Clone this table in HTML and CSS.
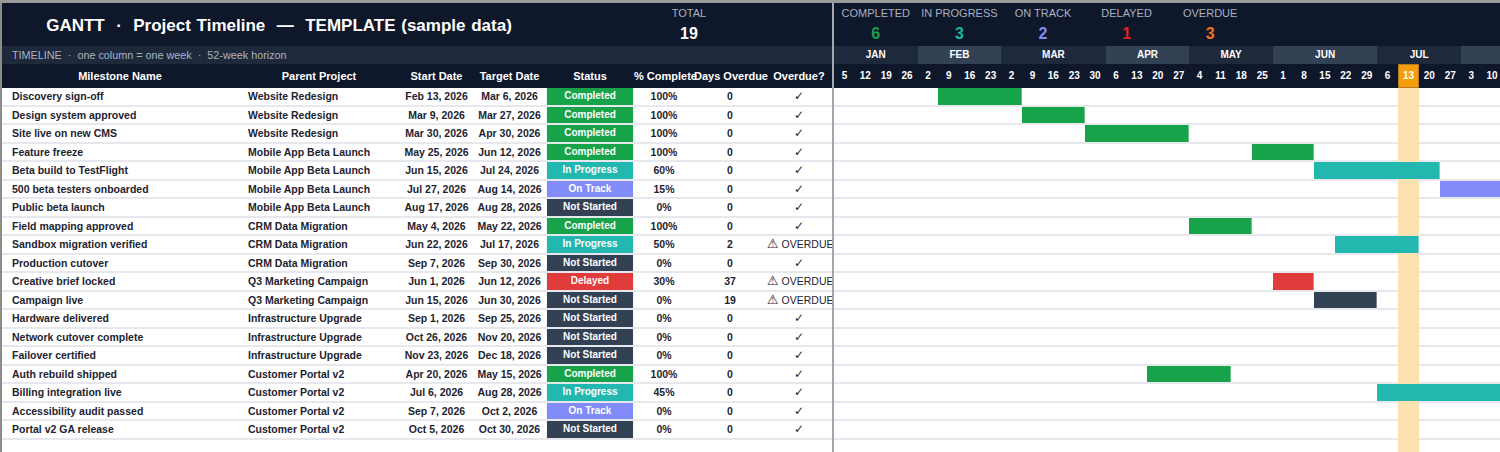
FILE: index.html
```html
<!DOCTYPE html>
<html lang="en">
<head>
<meta charset="utf-8">
<title>Gantt · Project Timeline</title>
<link rel="stylesheet" href="styles.css">
</head>
<body>
<div class="sheet">
  <div class="left">
    <div class="title-band">
      <div class="title">GANTT  ·  Project Timeline  —  TEMPLATE (sample data)</div>
      <div class="kpi"><div class="kpi-label">TOTAL</div><div class="kpi-num white">19</div></div>
    </div>
    <div class="subtitle">TIMELINE  ·  one column = one week  ·  52-week horizon</div>
    <div class="row head">
      <div class="c">Milestone Name</div>
      <div class="c">Parent Project</div>
      <div class="c">Start Date</div>
      <div class="c">Target Date</div>
      <div class="c">Status</div>
      <div class="c">% Complete</div>
      <div class="c">Days Overdue</div>
      <div class="c">Overdue?</div>
    </div>

    <div class="row"><div class="c l">Discovery sign-off</div><div class="c l">Website Redesign</div><div class="c">Feb 13, 2026</div><div class="c">Mar 6, 2026</div><div class="c st completed">Completed</div><div class="c">100%</div><div class="c">0</div><div class="c ok">✓</div></div>
    <div class="row"><div class="c l">Design system approved</div><div class="c l">Website Redesign</div><div class="c">Mar 9, 2026</div><div class="c">Mar 27, 2026</div><div class="c st completed">Completed</div><div class="c">100%</div><div class="c">0</div><div class="c ok">✓</div></div>
    <div class="row"><div class="c l">Site live on new CMS</div><div class="c l">Website Redesign</div><div class="c">Mar 30, 2026</div><div class="c">Apr 30, 2026</div><div class="c st completed">Completed</div><div class="c">100%</div><div class="c">0</div><div class="c ok">✓</div></div>
    <div class="row"><div class="c l">Feature freeze</div><div class="c l">Mobile App Beta Launch</div><div class="c">May 25, 2026</div><div class="c">Jun 12, 2026</div><div class="c st completed">Completed</div><div class="c">100%</div><div class="c">0</div><div class="c ok">✓</div></div>
    <div class="row"><div class="c l">Beta build to TestFlight</div><div class="c l">Mobile App Beta Launch</div><div class="c">Jun 15, 2026</div><div class="c">Jul 24, 2026</div><div class="c st progress">In Progress</div><div class="c">60%</div><div class="c">0</div><div class="c ok">✓</div></div>
    <div class="row"><div class="c l">500 beta testers onboarded</div><div class="c l">Mobile App Beta Launch</div><div class="c">Jul 27, 2026</div><div class="c">Aug 14, 2026</div><div class="c st ontrack">On Track</div><div class="c">15%</div><div class="c">0</div><div class="c ok">✓</div></div>
    <div class="row"><div class="c l">Public beta launch</div><div class="c l">Mobile App Beta Launch</div><div class="c">Aug 17, 2026</div><div class="c">Aug 28, 2026</div><div class="c st notstarted">Not Started</div><div class="c">0%</div><div class="c">0</div><div class="c ok">✓</div></div>
    <div class="row"><div class="c l">Field mapping approved</div><div class="c l">CRM Data Migration</div><div class="c">May 4, 2026</div><div class="c">May 22, 2026</div><div class="c st completed">Completed</div><div class="c">100%</div><div class="c">0</div><div class="c ok">✓</div></div>
    <div class="row"><div class="c l">Sandbox migration verified</div><div class="c l">CRM Data Migration</div><div class="c">Jun 22, 2026</div><div class="c">Jul 17, 2026</div><div class="c st progress">In Progress</div><div class="c">50%</div><div class="c">2</div><div class="c od"><span class="warn">⚠</span> OVERDUE</div></div>
    <div class="row"><div class="c l">Production cutover</div><div class="c l">CRM Data Migration</div><div class="c">Sep 7, 2026</div><div class="c">Sep 30, 2026</div><div class="c st notstarted">Not Started</div><div class="c">0%</div><div class="c">0</div><div class="c ok">✓</div></div>
    <div class="row"><div class="c l">Creative brief locked</div><div class="c l">Q3 Marketing Campaign</div><div class="c">Jun 1, 2026</div><div class="c">Jun 12, 2026</div><div class="c st delayed">Delayed</div><div class="c">30%</div><div class="c">37</div><div class="c od"><span class="warn">⚠</span> OVERDUE</div></div>
    <div class="row"><div class="c l">Campaign live</div><div class="c l">Q3 Marketing Campaign</div><div class="c">Jun 15, 2026</div><div class="c">Jun 30, 2026</div><div class="c st notstarted">Not Started</div><div class="c">0%</div><div class="c">19</div><div class="c od"><span class="warn">⚠</span> OVERDUE</div></div>
    <div class="row"><div class="c l">Hardware delivered</div><div class="c l">Infrastructure Upgrade</div><div class="c">Sep 1, 2026</div><div class="c">Sep 25, 2026</div><div class="c st notstarted">Not Started</div><div class="c">0%</div><div class="c">0</div><div class="c ok">✓</div></div>
    <div class="row"><div class="c l">Network cutover complete</div><div class="c l">Infrastructure Upgrade</div><div class="c">Oct 26, 2026</div><div class="c">Nov 20, 2026</div><div class="c st notstarted">Not Started</div><div class="c">0%</div><div class="c">0</div><div class="c ok">✓</div></div>
    <div class="row"><div class="c l">Failover certified</div><div class="c l">Infrastructure Upgrade</div><div class="c">Nov 23, 2026</div><div class="c">Dec 18, 2026</div><div class="c st notstarted">Not Started</div><div class="c">0%</div><div class="c">0</div><div class="c ok">✓</div></div>
    <div class="row"><div class="c l">Auth rebuild shipped</div><div class="c l">Customer Portal v2</div><div class="c">Apr 20, 2026</div><div class="c">May 15, 2026</div><div class="c st completed">Completed</div><div class="c">100%</div><div class="c">0</div><div class="c ok">✓</div></div>
    <div class="row"><div class="c l">Billing integration live</div><div class="c l">Customer Portal v2</div><div class="c">Jul 6, 2026</div><div class="c">Aug 28, 2026</div><div class="c st progress">In Progress</div><div class="c">45%</div><div class="c">0</div><div class="c ok">✓</div></div>
    <div class="row"><div class="c l">Accessibility audit passed</div><div class="c l">Customer Portal v2</div><div class="c">Sep 7, 2026</div><div class="c">Oct 2, 2026</div><div class="c st ontrack">On Track</div><div class="c">0%</div><div class="c">0</div><div class="c ok">✓</div></div>
    <div class="row"><div class="c l">Portal v2 GA release</div><div class="c l">Customer Portal v2</div><div class="c">Oct 5, 2026</div><div class="c">Oct 30, 2026</div><div class="c st notstarted">Not Started</div><div class="c">0%</div><div class="c">0</div><div class="c ok">✓</div></div>
  </div>

  <div class="divider"></div>

  <div class="right">
    <div class="kpi-band">
      <div class="kpi wk4"><div class="kpi-label">COMPLETED</div><div class="kpi-num green">6</div></div>
      <div class="kpi wk4"><div class="kpi-label">IN PROGRESS</div><div class="kpi-num teal">3</div></div>
      <div class="kpi wk4"><div class="kpi-label">ON TRACK</div><div class="kpi-num violet">2</div></div>
      <div class="kpi wk4"><div class="kpi-label">DELAYED</div><div class="kpi-num red">1</div></div>
      <div class="kpi wk4"><div class="kpi-label">OVERDUE</div><div class="kpi-num orange">3</div></div>
    </div>
    <div class="months">
      <div class="m dark w4">JAN</div>
      <div class="m light w4">FEB</div>
      <div class="m dark w5">MAR</div>
      <div class="m light w4">APR</div>
      <div class="m dark w4">MAY</div>
      <div class="m light w5">JUN</div>
      <div class="m dark w4">JUL</div>
      <div class="m light w5"></div>
    </div>
    <div class="weeks">
      <div>5</div><div>12</div><div>19</div><div>26</div>
      <div>2</div><div>9</div><div>16</div><div>23</div>
      <div>2</div><div>9</div><div>16</div><div>23</div><div>30</div>
      <div>6</div><div>13</div><div>20</div><div>27</div>
      <div>4</div><div>11</div><div>18</div><div>25</div>
      <div>1</div><div>8</div><div>15</div><div>22</div><div>29</div>
      <div>6</div><div class="today">13</div><div>20</div><div>27</div>
      <div>3</div><div>10</div>
    </div>
    <div class="gantt-body">
      <div class="today-band"></div>
      <div class="g-row"><div class="bar completed" style="grid-column: 6 / 10"></div></div>
      <div class="g-row"><div class="bar completed" style="grid-column: 10 / 13"></div></div>
      <div class="g-row"><div class="bar completed" style="grid-column: 13 / 18"></div></div>
      <div class="g-row"><div class="bar completed" style="grid-column: 21 / 24"></div></div>
      <div class="g-row"><div class="bar progress" style="grid-column: 24 / 30"></div></div>
      <div class="g-row"><div class="bar ontrack" style="grid-column: 30 / 33"></div></div>
      <div class="g-row"><div class="bar notstarted" style="grid-column: 33 / 35"></div></div>
      <div class="g-row"><div class="bar completed" style="grid-column: 18 / 21"></div></div>
      <div class="g-row"><div class="bar progress" style="grid-column: 25 / 29"></div></div>
      <div class="g-row"><div class="bar notstarted" style="grid-column: 36 / 40"></div></div>
      <div class="g-row"><div class="bar delayed" style="grid-column: 22 / 24"></div></div>
      <div class="g-row"><div class="bar notstarted" style="grid-column: 24 / 27"></div></div>
      <div class="g-row"><div class="bar notstarted" style="grid-column: 35 / 39"></div></div>
      <div class="g-row"><div class="bar notstarted" style="grid-column: 43 / 47"></div></div>
      <div class="g-row"><div class="bar notstarted" style="grid-column: 47 / 51"></div></div>
      <div class="g-row"><div class="bar completed" style="grid-column: 16 / 20"></div></div>
      <div class="g-row"><div class="bar progress" style="grid-column: 27 / 35"></div></div>
      <div class="g-row"><div class="bar ontrack" style="grid-column: 36 / 40"></div></div>
      <div class="g-row"><div class="bar notstarted" style="grid-column: 40 / 44"></div></div>
    </div>
  </div>
</div>
</body>
</html>
```

FILE: styles.css
```css
:root {
  --wk: 20.9px;
  --navy: #0f172a;
  --slate-d: #1e293b;
  --slate-l: #334155;
  --row-h: 18.5px;
  --line: #e6e8ee;
}

* { box-sizing: border-box; }

html, body {
  margin: 0;
  padding: 0;
  width: 1500px;
  height: 452px;
  overflow: hidden;
  background: #ffffff;
  font-family: "Liberation Sans", Arial, sans-serif;
}

body {
  border-top: 3px solid #9b9b9b;
}

.sheet {
  display: flex;
  height: 449px;
  border-left: 2px solid #8c8c8c;
}

/* ---------- left table ---------- */
.left {
  width: 830px;
  flex: none;
  display: flex;
  flex-direction: column;
}

.title-band {
  height: 43px;
  background: var(--navy);
  display: grid;
  grid-template-columns: 544px 286px;
}

.title {
  white-space: pre;
  color: #ffffff;
  font-weight: bold;
  font-size: 17px;
  word-spacing: 1px;
  display: flex;
  align-items: center;
  justify-content: center;
  padding-left: 10px;
  padding-top: 2px;
}

.kpi {
  display: flex;
  flex-direction: column;
  align-items: center;
  padding-top: 3px;
}

.kpi-label {
  color: #a9b1c2;
  font-size: 11px;
  line-height: 14px;
}

.kpi-num {
  font-size: 16px;
  font-weight: bold;
  line-height: 20px;
  margin-top: 4px;
}

.white { color: #ffffff; }
.green { color: #16a34a; }
.teal { color: #14b8a6; }
.violet { color: #818cf8; }
.red { color: #dc2626; }
.orange { color: #f97316; }

.subtitle {
  height: 18px;
  background: var(--slate-d);
  color: #aab3c4;
  font-size: 10.8px;
  line-height: 18px;
  padding-left: 10px;
  white-space: pre;
}

.row {
  display: grid;
  grid-template-columns: 236px 162px 73px 73px 88px 60px 72px 66px;
  height: var(--row-h);
  border-bottom: 2px solid var(--line);
  font-size: 10.5px;
  font-weight: bold;
  color: #1e2330;
}

.row .c {
  line-height: 16.5px;
  text-align: center;
  white-space: nowrap;
}

.row .l {
  text-align: left;
  padding-left: 10px;
}

.row.head {
  height: 24px;
  border-bottom: none;
  background: var(--navy);
  color: #ffffff;
  font-size: 11px;
}

.row.head .c {
  line-height: 24px;
}

.st {
  color: #ffffff;
  font-size: 10px;
  border-left: 1px solid #f3f4f7;
  border-right: 1px solid #f3f4f7;
}

.completed { background: #16a34a; }
.progress { background: #22b8b0; }
.ontrack { background: #818cf8; }
.notstarted { background: #334155; }
.delayed { background: #e03c3c; }

.ok {
  font-family: "DejaVu Sans", sans-serif;
  font-size: 12px;
  font-weight: bold;
}

.od {
  font-weight: normal;
  font-size: 10.5px;
  text-align: left !important;
  padding-left: 1px;
}

.warn {
  font-family: "DejaVu Sans", sans-serif;
  font-size: 13px;
  line-height: 14px;
}

/* ---------- divider ---------- */
.divider {
  width: 2px;
  flex: none;
  background: #a3a7ae;
}

/* ---------- right gantt ---------- */
.right {
  flex: 1;
  min-width: 0;
  overflow: hidden;
  display: flex;
  flex-direction: column;
}

.kpi-band {
  height: 43px;
  flex: none;
  background: var(--navy);
  display: flex;
}

.wk4 {
  width: calc(var(--wk) * 4);
  flex: none;
}

.months {
  height: 18px;
  flex: none;
  display: flex;
}

.m {
  flex: none;
  color: #ffffff;
  font-size: 10px;
  font-weight: bold;
  text-align: center;
  line-height: 18px;
}

.m.dark { background: var(--slate-d); }
.m.light { background: var(--slate-l); }
.w4 { width: calc(var(--wk) * 4); }
.w5 { width: calc(var(--wk) * 5); }

.weeks {
  height: 24px;
  flex: none;
  background: var(--navy);
  display: grid;
  grid-template-columns: repeat(52, var(--wk));
}

.weeks div {
  color: #ffffff;
  font-size: 10px;
  font-weight: bold;
  text-align: center;
  line-height: 24px;
}

.weeks .today {
  background: #f59e0b;
  border: 1px solid #b7791f;
  line-height: 22px;
}

.gantt-body {
  flex: 1;
  position: relative;
}

.today-band {
  position: absolute;
  top: 0;
  bottom: 0;
  left: calc(var(--wk) * 27);
  width: var(--wk);
  background: #fde2b1;
  z-index: 1;
}

.g-row {
  display: grid;
  grid-template-columns: repeat(52, var(--wk));
  height: var(--row-h);
  border-bottom: 2px solid var(--line);
}

.bar {
  grid-row: 1;
  position: relative;
  z-index: 2;
  box-shadow: inset -1px 0 0 rgba(255, 255, 255, 0.35);
}
```
